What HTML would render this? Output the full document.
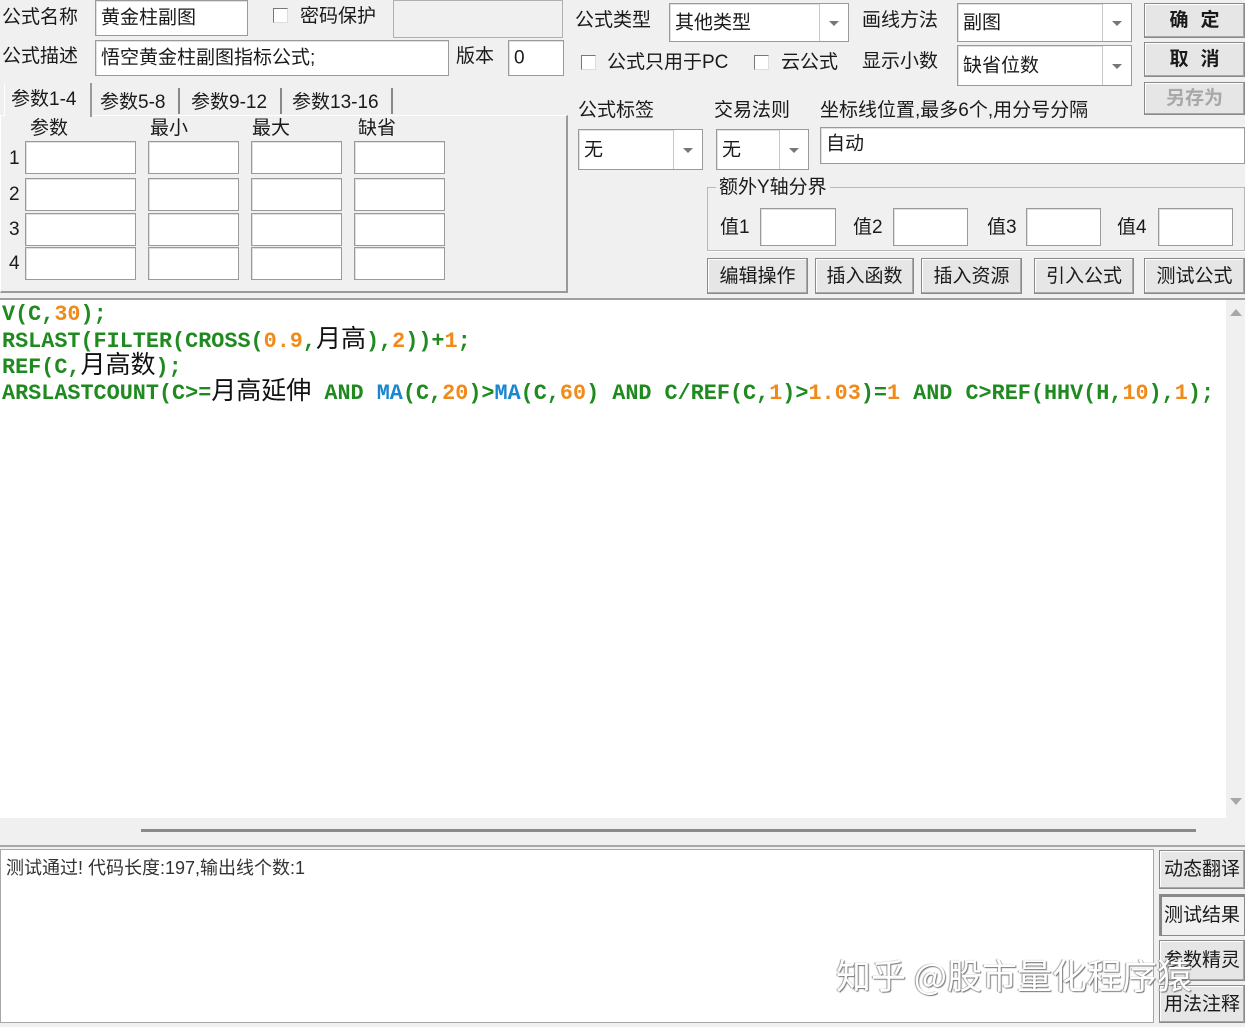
<!DOCTYPE html>
<html><head><meta charset="utf-8"><style>
*{box-sizing:border-box;margin:0;padding:0}
body{width:1245px;height:1027px;background:#f0f0f0;position:relative;overflow:hidden;font-family:"Liberation Sans","Noto Sans CJK SC",sans-serif;font-size:19px;color:#1a1a1a}
.a{position:absolute;white-space:nowrap;line-height:1}
.in{position:absolute;background:#fff;border:1px solid #9a9a9a;box-shadow:inset 1px 1px 0 #e0e0e0}
.in span{position:absolute;left:5px;top:50%;transform:translateY(-50%);line-height:1}
.cb{position:absolute;width:15px;height:15px;background:#fff;border:1px solid #777;border-right-color:#ddd;border-bottom-color:#ddd}
.btn{position:absolute;background:#e6e6e6;border:1px solid #8a8a8a;box-shadow:inset -1px -1px 0 #a8a8a8,inset 1px 1px 0 #fff;display:flex;align-items:center;justify-content:center;line-height:1}
.arr{position:absolute;top:0;bottom:0;right:0;border-left:1px solid #c8c8c8;background:#fff}
.arr:after{content:"";position:absolute;left:50%;top:50%;margin:-2px 0 0 -5px;border:5px solid transparent;border-top:5px solid #777;border-bottom:0}
.code{position:absolute;left:2px;height:26px;font-family:"Liberation Mono","Noto Sans CJK SC",monospace;font-weight:bold;font-size:21.8px;line-height:26px;color:#1f8a1f;white-space:pre}
.o{color:#f08a18}.b{color:#1a86cf}
.cj{font-family:"Noto Sans CJK SC",sans-serif;font-weight:normal;font-size:25px;color:#111;line-height:0}
</style></head><body>
<div class="a" style="left:2px;top:8px">公式名称</div>
<div class="in" style="left:95px;top:0;width:153px;height:36px"><span>黄金柱副图</span></div>
<div class="cb" style="left:273px;top:8px"></div>
<div class="a" style="left:300px;top:7px">密码保护</div>
<div class="a" style="left:393px;top:0;width:170px;height:38px;border:1px solid #b0b0b0"></div>
<div class="a" style="left:2px;top:47px">公式描述</div>
<div class="in" style="left:95px;top:40px;width:354px;height:36px"><span>悟空黄金柱副图指标公式;</span></div>
<div class="a" style="left:456px;top:47px">版本</div>
<div class="in" style="left:508px;top:40px;width:56px;height:36px"><span>0</span></div>
<div class="a" style="left:0;top:115px;width:568px;height:178px;border:1px solid #fff;border-right:2px solid #9a9a9a;border-bottom:2px solid #9a9a9a"></div>
<div class="a" style="left:4px;top:83px;width:88px;height:34px;background:#f0f0f0;border-left:1px solid #fff;border-right:2px solid #9a9a9a"></div>
<div class="a" style="left:11px;top:90px">参数1-4</div>
<div class="a" style="left:100px;top:93px">参数5-8</div>
<div class="a" style="left:178px;top:88px;width:1px;height:26px;border-right:2px solid #888"></div>
<div class="a" style="left:191px;top:93px">参数9-12</div>
<div class="a" style="left:280px;top:88px;width:1px;height:26px;border-right:2px solid #888"></div>
<div class="a" style="left:292px;top:93px">参数13-16</div>
<div class="a" style="left:391px;top:88px;width:1px;height:26px;border-right:2px solid #888"></div>
<div class="a" style="left:30px;top:119px">参数</div>
<div class="a" style="left:150px;top:119px">最小</div>
<div class="a" style="left:252px;top:119px">最大</div>
<div class="a" style="left:358px;top:119px">缺省</div>
<div class="a" style="left:9px;top:149px">1</div>
<div class="a" style="left:9px;top:185px">2</div>
<div class="a" style="left:9px;top:220px">3</div>
<div class="a" style="left:9px;top:254px">4</div>
<div class="in" style="left:25px;top:141px;width:111px;height:33px"></div><div class="in" style="left:148px;top:141px;width:91px;height:33px"></div><div class="in" style="left:251px;top:141px;width:91px;height:33px"></div><div class="in" style="left:354px;top:141px;width:91px;height:33px"></div>
<div class="in" style="left:25px;top:178px;width:111px;height:33px"></div><div class="in" style="left:148px;top:178px;width:91px;height:33px"></div><div class="in" style="left:251px;top:178px;width:91px;height:33px"></div><div class="in" style="left:354px;top:178px;width:91px;height:33px"></div>
<div class="in" style="left:25px;top:213px;width:111px;height:33px"></div><div class="in" style="left:148px;top:213px;width:91px;height:33px"></div><div class="in" style="left:251px;top:213px;width:91px;height:33px"></div><div class="in" style="left:354px;top:213px;width:91px;height:33px"></div>
<div class="in" style="left:25px;top:247px;width:111px;height:33px"></div><div class="in" style="left:148px;top:247px;width:91px;height:33px"></div><div class="in" style="left:251px;top:247px;width:91px;height:33px"></div><div class="in" style="left:354px;top:247px;width:91px;height:33px"></div>
<div class="a" style="left:575px;top:11px">公式类型</div>
<div class="in" style="left:669px;top:3px;width:180px;height:39px"><span>其他类型</span><div class="arr" style="width:29px"></div></div>
<div class="a" style="left:862px;top:11px">画线方法</div>
<div class="in" style="left:957px;top:3px;width:175px;height:39px"><span>副图</span><div class="arr" style="width:29px"></div></div>
<div class="btn" style="left:1144px;top:3px;width:101px;height:35px;font-weight:bold;letter-spacing:12px;padding-left:12px">确定</div>
<div class="btn" style="left:1144px;top:42px;width:101px;height:35px;font-weight:bold;letter-spacing:12px;padding-left:12px">取消</div>
<div class="btn" style="left:1144px;top:82px;width:101px;height:33px;color:#a8a8a8;font-weight:bold">另存为</div>
<div class="cb" style="left:581px;top:55px"></div>
<div class="a" style="left:607px;top:53px">公式只用于PC</div>
<div class="cb" style="left:754px;top:55px"></div>
<div class="a" style="left:781px;top:53px">云公式</div>
<div class="a" style="left:862px;top:52px">显示小数</div>
<div class="in" style="left:957px;top:45px;width:175px;height:41px"><span>缺省位数</span><div class="arr" style="width:29px"></div></div>
<div class="a" style="left:578px;top:101px">公式标签</div>
<div class="a" style="left:714px;top:101px">交易法则</div>
<div class="a" style="left:820px;top:101px">坐标线位置,最多6个,用分号分隔</div>
<div class="in" style="left:578px;top:129px;width:125px;height:41px"><span>无</span><div class="arr" style="width:29px"></div></div>
<div class="in" style="left:716px;top:129px;width:93px;height:41px"><span>无</span><div class="arr" style="width:29px"></div></div>
<div class="in" style="left:820px;top:127px;width:425px;height:37px"><span style="top:45%">自动</span></div>
<div class="a" style="left:707px;top:187px;width:538px;height:64px;border:1px solid #b8b8b8;box-shadow:1px 1px 0 #fff"></div>
<div class="a" style="left:716px;top:178px;background:#f0f0f0;padding:0 3px">额外Y轴分界</div>
<div class="a" style="left:720px;top:218px">值1</div><div class="in" style="left:760px;top:208px;width:76px;height:38px"></div>
<div class="a" style="left:853px;top:218px">值2</div><div class="in" style="left:893px;top:208px;width:75px;height:38px"></div>
<div class="a" style="left:987px;top:218px">值3</div><div class="in" style="left:1026px;top:208px;width:75px;height:38px"></div>
<div class="a" style="left:1117px;top:218px">值4</div><div class="in" style="left:1158px;top:208px;width:75px;height:38px"></div>
<div class="btn" style="left:707px;top:258px;width:101px;height:36px">编辑操作</div>
<div class="btn" style="left:815px;top:258px;width:99px;height:36px">插入函数</div>
<div class="btn" style="left:921px;top:258px;width:101px;height:36px">插入资源</div>
<div class="btn" style="left:1034px;top:258px;width:100px;height:36px">引入公式</div>
<div class="btn" style="left:1144px;top:258px;width:101px;height:36px">测试公式</div>
<div class="a" style="left:0;top:298px;width:1245px;height:2px;background:#a0a0a0"></div>
<div class="a" style="left:0;top:300px;width:1226px;height:518px;background:#fff"></div>
<div class="a" style="left:1226px;top:300px;width:19px;height:518px;background:#f0f0f0"></div>
<div class="a" style="left:1230px;top:309px;border:6px solid transparent;border-bottom:7px solid #a8a8a8;border-top:0"></div>
<div class="a" style="left:1230px;top:798px;border:6px solid transparent;border-top:7px solid #a8a8a8;border-bottom:0"></div>
<div class="a" style="left:141px;top:829px;width:1055px;height:3px;background:#8a8a8a"></div>
<div class="a" style="left:0;top:845px;width:1245px;height:2px;background:#a8a8a8"></div>
<div class="code" style="top:302px">V(C,<span class="o">30</span>);</div>
<div class="code" style="top:329px">RSLAST(FILTER(CROSS(<span class="o">0.9</span>,<span class="cj">月高</span>),<span class="o">2</span>))+<span class="o">1</span>;</div>
<div class="code" style="top:355px">REF(C,<span class="cj">月高数</span>);</div>
<div class="code" style="top:381px">ARSLASTCOUNT(C&gt;=<span class="cj">月高延伸</span> AND <span class="b">MA</span>(C,<span class="o">20</span>)&gt;<span class="b">MA</span>(C,<span class="o">60</span>) AND C/REF(C,<span class="o">1</span>)&gt;<span class="o">1.03</span>)=<span class="o">1</span> AND C&gt;REF(HHV(H,<span class="o">10</span>),<span class="o">1</span>);</div>
<div class="a" style="left:0;top:849px;width:1154px;height:174px;background:#fff;border:1px solid #a8a8a8"></div>
<div class="a" style="left:6px;top:859px;font-size:18px;color:#333">测试通过! 代码长度:197,输出线个数:1</div>
<div class="btn" style="left:1159px;top:850px;width:86px;height:39px">动态翻译</div>
<div class="btn" style="left:1159px;top:894px;width:86px;height:42px;box-shadow:inset 2px 2px 0 #888;background:#f0f0f0">测试结果</div>
<div class="btn" style="left:1159px;top:940px;width:86px;height:41px">参数精灵</div>
<div class="btn" style="left:1159px;top:985px;width:86px;height:38px">用法注释</div>
<div class="a" style="left:836px;top:957px;font-family:'Noto Sans CJK SC',sans-serif;font-size:35px;color:#fff;text-shadow:1px 1px 1px #777,-1px 0 1px #999">知乎 @股市量化程序猿</div>
</body></html>
